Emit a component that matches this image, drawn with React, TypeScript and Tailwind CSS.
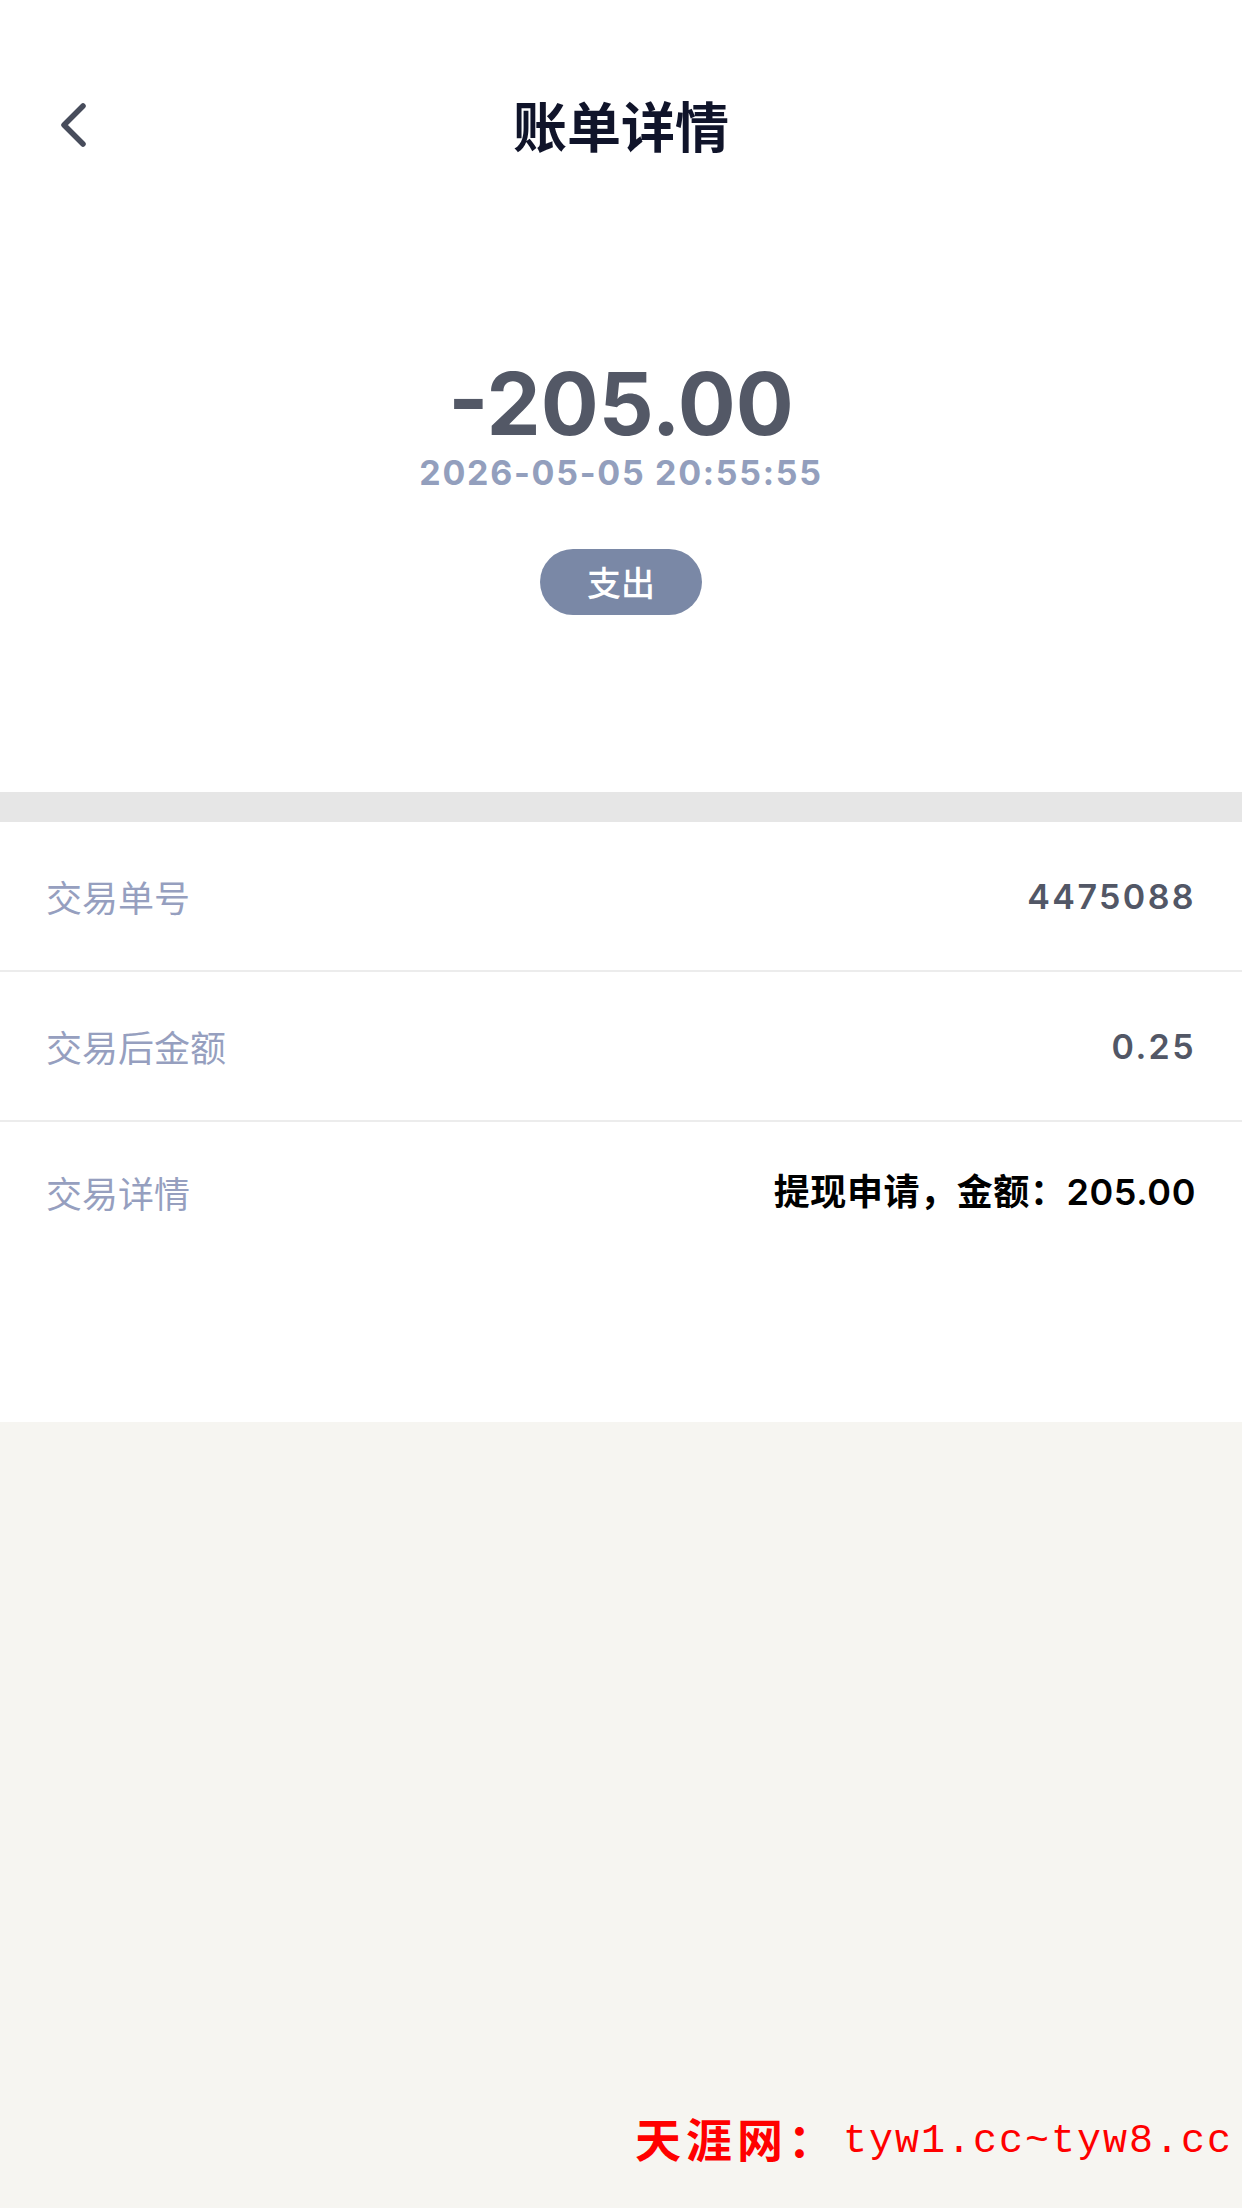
const cjk = '"Noto Sans CJK SC", sans-serif';
const num = 'Inter, "Noto Sans CJK SC", sans-serif';

interface Row {
  label: string;
  value: string;
}

const rows: Row[] = [
  { label: '交易单号', value: '4475088' },
  { label: '交易后金额', value: '0.25' },
];

function BackIcon() {
  return (
    <svg width="40" height="48" viewBox="0 0 40 48" fill="none">
      <path d="M30 5 L11 24 L30 43" stroke="#474c5b" strokeWidth="5.5" strokeLinecap="round" strokeLinejoin="round" />
    </svg>
  );
}

export default function App() {
  return (
    <div className="min-h-[2208px] w-full bg-[#f6f5f1] flex flex-col" style={{ fontFamily: cjk }}>
      <div className="bg-white h-[792px] flex flex-col items-center">
        <div className="w-full pt-[75px] h-[175px] grid grid-cols-[140px_1fr_140px] items-center">
          <div className="h-[100px] flex items-center pl-[53px]">
            <BackIcon />
          </div>
          <h1 className="text-center text-[54px] font-semibold text-[#10142a] leading-none">账单详情</h1>
          <div />
        </div>
        <div
          className="mt-[189px] text-[86px] font-bold leading-[80px] text-[#535866]"
          style={{ fontFamily: num }}
        >
          -205.00
        </div>
        <div
          className="mt-[12px] text-[34px] font-bold leading-none text-[#939fbd] tracking-[1.7px]"
          style={{ fontFamily: num }}
        >
          2026-05-05 20:55:55
        </div>
        <div className="mt-[59px] h-[66px] w-[162px] rounded-full bg-[#7a88a6] flex items-center justify-center">
          <span className="text-[34px] font-medium text-white leading-none">支出</span>
        </div>
      </div>

      <div className="h-[30px] bg-[#e6e6e6]" />

      <div className="bg-white h-[600px] flex flex-col">
        {rows.map((r) => (
          <div
            key={r.label}
            className="h-[150px] border-b-2 border-[#ececec] px-[46px] flex items-center justify-between"
          >
            <span className="text-[36px] text-[#969fbf]">{r.label}</span>
            <span
              className="text-[34px] font-semibold text-[#525766] tracking-[2.4px]"
              style={{ fontFamily: num }}
            >
              {r.value}
            </span>
          </div>
        ))}
        <div className="px-[46px] pt-[46px] flex items-start justify-between">
          <span className="text-[36px] leading-[48px] text-[#969fbf]">交易详情</span>
          <span
            className="text-[36px] leading-[48px] font-semibold text-black tracking-[0.6px]"
            style={{ fontFamily: num }}
          >
            提现申请，金额：205.00
          </span>
        </div>
      </div>

      <div className="flex-1 flex flex-col justify-end items-end pb-[43px] pr-[9px]">
        <div className="flex items-center text-[#ff0000] leading-none">
          <span
            className="text-[46px] font-bold tracking-[5px]"
            style={{ fontFamily: '"Liberation Serif", "Noto Sans CJK SC", serif' }}
          >
            天涯网：
          </span>
          <span
            className="ml-[4px] text-[40px] tracking-[2px]"
            style={{ fontFamily: '"Liberation Mono", monospace' }}
          >
            tyw1.cc~tyw8.cc
          </span>
        </div>
      </div>
    </div>
  );
}
